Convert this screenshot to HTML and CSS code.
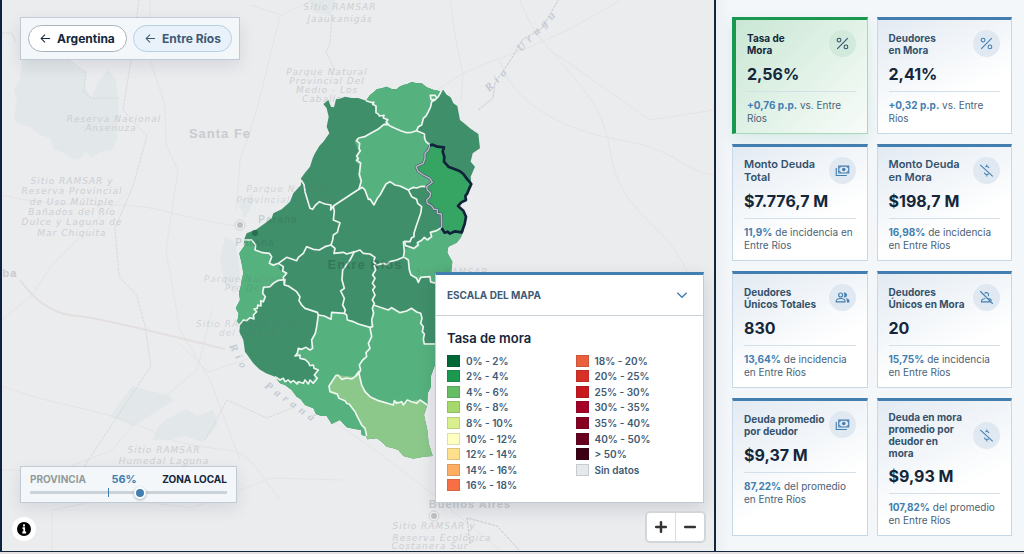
FILE: index.html
```html
<!DOCTYPE html>
<html lang="es">
<head>
<meta charset="utf-8">
<meta name="viewport" content="width=device-width, initial-scale=1">
<title>Mapa de mora - Entre Ríos</title>
<link rel="stylesheet" href="styles.css">
</head>
<body>
<svg class="sprite" aria-hidden="true">
  <symbol id="i-percent" viewBox="0 0 24 24"><g fill="none" stroke="currentColor" stroke-width="1.700"><circle cx="6.500" cy="6.500" r="3"/><circle cx="17.500" cy="17.500" r="3"/><path d="M20.500 3.500l-17 17"/></g></symbol>
  <symbol id="i-cash" viewBox="0 0 24 24"><g fill="none" stroke="currentColor" stroke-width="1.800"><path d="M6 5h16v11H6zM2 8v12h17"/></g><circle cx="14" cy="10.500" r="2.800" fill="currentColor"/><path d="M6 8a3 3 0 0 0 3-3M19 5a3 3 0 0 0 3 3M6 13a3 3 0 0 1 3 3M19 16a3 3 0 0 1 3-3" fill="none" stroke="currentColor" stroke-width="1.500"/></symbol>
  <symbol id="i-cash-off" viewBox="0 0 24 24"><path d="M2 3L22 21.500M12.500 2.500v3M12.500 18.500v3M16 8c-.7-1.800-2-2.500-3.500-2.500-1 0-1.800.3-2.500.7M8.500 15.500c.5 2 2 2.900 4 2.900 1.300 0 2.400-.3 3.200-1" fill="none" stroke="currentColor" stroke-width="1.700"/></symbol>
  <symbol id="i-group" viewBox="0 0 24 24"><g fill="none" stroke="currentColor" stroke-width="1.800"><circle cx="9" cy="8" r="3.200"/><path d="M2 19v-2c0-2.300 4.500-3.500 7-3.500s7 1.200 7 3.500v2z"/></g><path d="M14 4.200a4 4 0 1 1 0 7.600c1.400-2.300 1.400-5.300 0-7.600zM17 13.300c3 .4 6 1.700 6 3.900V20h-4v-3c0-1.500-.8-2.700-2-3.700z" fill="currentColor"/></symbol>
  <symbol id="i-person-off" viewBox="0 0 24 24"><path d="M2 2l20 20M9 5.500A3.500 3.500 0 1 1 14.500 10M14 13.500c3 .3 5.500 1.500 6 3.500M10 13.500c-3 .4-6 1.800-6 4V19h14" fill="none" stroke="currentColor" stroke-width="1.700"/></symbol>
  <symbol id="i-back" viewBox="0 0 24 24"><path d="M22 12H3M11 3.500L2.500 12l8.500 8.500" fill="none" stroke="currentColor" stroke-width="2.200"/></symbol>
</svg>

<main class="app">
  <section class="map" aria-label="Mapa">
    <svg class="map-canvas" viewBox="2 0 712 551" preserveAspectRatio="xMidYMid slice">
      <defs>
        <clipPath id="province"><path d="M280 102L288 96 295 90 303 110 312 112 318 88 330 86 345 80 365 84 385 84 408 92 420 75 432 66 440 58 455 55 470 50 485 57 500 58 508 50 520 45 532 42 545 36 560 40 575 40 590 52 612 60 632 64 640 60 650 74 662 82 670 100 682 108 690 150 705 162 720 175 745 192 750 235 728 250 722 275 735 290 722 320 724 342 712 370 706 390 684 408 708 440 700 485 692 503 680 518 655 530 652 548 667 575 664 605 656 640 700 760 613 890 602 920 603 950 593 970 592 1005 582 1035 592 1080 596 1120 608 1158 580 1160 550 1166 520 1158 505 1140 490 1135 470 1130 455 1115 440 1105 412 1108 408 1098 395 1095 393 1080 370 1076 350 1072 330 1050 318 1055 305 1062 290 1038 272 1037 258 1032 250 1015 225 1005 212 988 200 980 185 960 165 945 150 940 135 920 108 910 88 898 70 880 45 845 40 810 28 785 30 765 22 755 26 730 17 715 30 690 27 668 32 650 35 630 40 610 36 585 28 550 36 538 45 525 42 510 50 490 80 478 105 460 125 445 130 430 155 418 180 395 190 370 213 345 213 325 225 308 240 290 248 265 255 250 268 228 280 215 298 190 290 170 296 140 290 115z"/></clipPath>
      </defs>
      <rect x="-300" y="-300" width="1400" height="1200" fill="#ebecee"/>
      <g class="water">
        <path d="M22 60L65 58 74 66 86 72 85 88 92 98 98 82 108 70 116 80 119 110 117 140 112 150 100 152 92 158 86 152 78 160 70 158 62 152 54 150 50 138 40 135 30 127 20 124 14 119 17 100 14 90 20 80z"/>
        <path d="M132 386L170 396 173 401 134 426 110 417zM153 440L158 427 165 420 187 409 197 416 213 410 218 424 210 434 202 442 185 436 167 440z"/>
        <path d="M225 237l10 5 5 30-5 22-10-10-5-25zM309 0h26l-4 16-17-4zM238 203l14-10 2 8-9 18z"/>
      </g>
      <g class="roads">
        <path class="road-main" d="M20 280C40 308 60 315 78 316S180 338 225 349"/>
        <path d="M2 195C60 210 120 200 160 210S210 222 238 226M330 420C380 450 440 500 500 550"/>
        <path d="M2 386C50 405 90 407 130 422S160 440 205 447 240 446 280 500M150 0v60l15 45 1 40 12 25-12 80 14 80 30 50 30 80M281 14C270 50 260 110 240 160l-4 50M250 5l32 10 40-20M450 0l5 35 8 40-2 25M620 0c-80 50-120 55-160 75l-30 20M2 320l30-25 20-30 50-50 25-22M178 342l30 30 60-20 30 0M2 470h60l50-20 25-30 60-50 15-60M52 550v-40l60-12 80 10 80-30 70 2M500 60c10 40 60 70 120 80s60 30 94 35M520 0c20 60 80 80 90 150s60 70 80 130M550 50l100 70 64-10"/>
      </g>
      <g class="limits">
        <path d="M139 0l-8 60-8 50 24 26-14 50-18 42 4 48 18 20 8 30 6 40-24 36-60 90M2 33h10l4 9M68 60l18 12-2 20 7 6h28M205 440l22-40 40 18 25-10M332 15l-2 28-4 9 9 18"/>
        <path class="limit-strong" d="M478 110l15-12 2-15 15-22 10-17 2-4 20-12 6-10 10-18 6-2M470 544l-3-26 30 8 22 24"/>
      </g>
      <g class="places">
        <g class="parks">
          <text x="340" y="10">Sitio RAMSAR</text><text x="340" y="22">Jaaukanigás</text>
          <text x="327" y="75">Parque Natural</text><text x="327" y="84">Provincial Del</text><text x="327" y="93">Medio - Los</text><text x="325" y="102">Caballos</text>
          <text x="114" y="122">Reserva Nacional</text><text x="111" y="131">Ansenuza</text>
          <text x="72" y="184">Sitio RAMSAR y</text><text x="72" y="194">Reserva Provincial</text><text x="72" y="205">de Uso Múltiple</text><text x="72" y="215">Bañados del Río</text><text x="72" y="225">Dulce y Laguna de</text><text x="72" y="236">Mar Chiquita</text>
          <text x="164" y="453">Sitio RAMSAR</text><text x="164" y="464">Humedal Laguna</text>
          <text x="434" y="529">Sitio RAMSAR y</text><text x="442" y="541">Reserva Ecológica</text><text x="430" y="549">Costanera Sur</text>
        </g>
        <text class="state" x="220" y="138">Santa Fe</text>
        <text class="town" x="10" y="277">ba</text>
        <text class="town" x="470" y="508">Buenos Aires</text>
        <g class="river"><text transform="translate(489 92) rotate(-45)">Río</text><text transform="translate(521 52) rotate(-46)">Urugu</text><text transform="translate(229 346) rotate(62)">Río</text><text transform="translate(264 387) rotate(36)">Paraná</text></g>
        <g class="pin"><circle cx="240" cy="225" r="5"/><circle cx="434" cy="516" r="5"/></g>
        <g fill="#bfc0c3"><circle cx="240" cy="225" r="3"/><circle cx="434" cy="516" r="3"/></g>
      </g>
      <g transform="translate(230 70) scale(.333333)">
        <g clip-path="url(#province)">
          <path fill="#408f6b" d="M0 0H800V1200H0z"/>
          <g fill="#55b17d">
            <path d="M408 92L432 97 438 128 462 138 470 158 495 175 530 188 560 182 575 165 580 145 595 125 605 95 625 80 640 40 560 0 400 20z"/>
            <path d="M458 163L470 158 495 175 530 188 560 182 583 200 588 215 600 225 585 265 580 280 558 290 565 305 600 325 607 337 590 350 560 352 535 360 510 348 480 335 468 342 450 375 432 405 415 385 400 355 383 360 390 335 384 315 388 285 374 272 385 240 373 215 400 200 440 178z"/>
            <path d="M635 472L603 487 605 500 580 505 560 520 552 535 527 535 520 550 523 562 535 570 540 610 565 635 572 622 600 620 602 638 800 640 800 480z"/>
            <path d="M0 510L42 510 65 512 75 540 98 548 118 550 122 580 145 580 150 600 170 610 155 628 110 650 98 670 105 692 75 720 72 745 40 750 28 765 0 765z"/>
            <path d="M262 730L305 748 305 727 343 730 352 750 385 760 420 772 430 710 475 720 485 715 510 728 545 715 570 728 578 780 582 820 800 820 800 1000 592 1005 408 1120 100 1080 100 915 135 920 180 940 200 935 240 940 250 930 262 900 225 865 195 858 205 835 240 838 245 810 260 770z"/>
          </g>
          <path fill="#8bc88a" d="M387 910L375 920 320 916 297 948 305 970 345 990 375 1025 395 1065 408 1085 408 1200 650 1200 592 1005 560 990 520 1000 500 992 490 1005 420 980 395 945z"/>
          <path fill="#36a463" d="M600 225L642 232 640 260 648 285 700 308 724 342 712 365 706 390 684 408 708 440 695 487 665 490 635 472 632 430 610 405 590 390 602 375 590 350 607 337 600 325 565 305 558 290 580 280 585 265z"/>
        </g>
        <g class="borders">
          <path d="M408 92l14 5 10 0-4 6 10 5 0 20 8 5 2 5 14-2-2 8 14 5-6 7 7 8-13-1-18 15-22 12-18 10-18 4-7 8 10 8-2 16 4 6-11 16 5 8-5 5 12 8-2 18-2 16 6 20-7 25"/>
          <path d="M470 158L480 168 495 175 512 182 530 188 545 187 560 182 565 170 575 165 580 145 588 138 595 125 602 110 605 95 615 90 625 80 635 62M601 76h14l6 8-6 5h-12zM560 182L583 192 584 206 588 215 600 225"/>
          <path d="M590 350L575 349 560 354 550 352 535 360 510 348 495 345 480 335 468 342 450 375 442 385 432 405 420 387 415 388 405 360 397 352 383 360 310 408"/>
          <path d="M213 330L222 344 225 365 234 395 240 415 248 418 256 406 268 395 285 402 303 405 302 420 310 408 313 425 310 450 330 458 325 475 322 487 310 495 308 510 303 525"/>
          <path d="M535 360L545 380 560 388 563 400 575 410 572 430 565 450 558 470 552 490 552 500 545 503 540 515 523 514 527 527 552 535 565 525 562 518 576 510 583 502 592 510 605 500 601 487 620 482 635 472"/>
          <path d="M42 510L65 510 77 525 75 540 98 548 118 550 125 560 118 580 130 586 145 580 170 562 200 572 205 562 220 550 230 530 250 538 268 540 285 530 303 525 315 535 312 550 340 547 350 552 375 545 390 540 400 550 420 552 435 562 430 575 440 585 460 580 470 584 480 575 500 570 520 562 523 545 520 514"/>
          <path d="M145 580L160 590 158 603 170 610 160 622 163 645 165 629 145 631 130 640 120 650 100 652 98 670 106 680 100 695 92 692 93 708 83 705 82 715 72 717 80 725 70 735 72 747 60 743 50 752 40 750 28 765"/>
          <path d="M163 645L175 648 200 665 210 680 207 692 215 705 225 715 262 727 265 735 283 738 303 748 305 727 343 730 346 720 338 705 343 685 332 663 343 655 336 630 338 600 360 570 373 545"/>
          <path d="M343 730L350 735 352 750 370 755 385 762 420 772 428 770 425 750 431 730 427 715 433 700 427 690 435 675 428 660 435 650 427 640 435 625 428 615 437 600 432 585"/>
          <path d="M430 705L475 720 485 713 510 728 530 723 545 715 560 726 572 730 576 745 572 760 580 770 577 785 583 792 580 808 583 822 620 822M523 562L535 570 538 600 543 615 560 625 565 637 572 622 600 620 602 636 620 640"/>
          <path d="M265 735L260 770 256 790 245 810 248 835 240 840 228 832 215 838 205 835 202 850 195 858 210 855 210 865 225 868 235 877 240 887 250 885 252 895 265 900 253 915 262 925 250 940 240 930 235 942 225 930 220 940 205 935 202 942 190 932 182 938 175 930 165 935 160 925 150 930 135 920"/>
          <path d="M420 772L425 800 415 820 420 835 408 848 410 860 398 870 388 885 392 900 387 910 375 920 365 927 350 924 335 928 325 916 318 916 297 948 300 965 322 972 327 985 345 992 350 1000 358 1003 375 1025 382 1040 395 1065 405 1075 410 1098"/>
          <path d="M387 910L395 945 405 965 420 980 445 992 490 1005 493 992 500 1000 515 995 520 1005 532 990 545 995 560 1000 570 990 592 1005M388 902l-13 18"/>
        </g>
        <path class="sel-shared-edge" d="M600 225L595 240 585 250 585 265 580 280 558 290 565 305 580 315 600 325 607 337 590 350 592 360 602 370 600 380 590 390 592 400 605 408 612 418 622 418 622 430 634 432 635 472"/>
        <path class="sel-shared" d="M600 225L595 240 585 250 585 265 580 280 558 290 565 305 580 315 600 325 607 337 590 350 592 360 602 370 600 380 590 390 592 400 605 408 612 418 622 418 622 430 634 432 635 472"/>
        <path class="sel" d="M600 226L608 224 622 230 642 232 638 245 643 260 642 275 655 290 675 298 690 304 700 312 712 328 724 342 718 355 712 370 706 378 708 390 694 397 684 408 700 422 708 440 704 462 695 487 675 484 660 491 652 485 644 488 635 474"/>
      </g>
      <g class="overlay">
        <text class="town region" x="365" y="269">Entre Ríos</text>
        <text class="town small" x="278" y="223">Paraná</text><text class="town small" x="255" y="246">Paraná</text>
        <circle cx="255" cy="233" r="3" fill="#2b6e51"/>
        <g class="parks"><text x="287" y="192">Parque Natural</text><text x="287" y="203">Provincial Cayastá</text><text x="248" y="282">Parque Nacional</text><text x="250" y="291">Pre Delta</text><text x="249" y="327">Sitio RAMSAR Delta</text><text x="248" y="336">del Paraná</text><text x="452" y="275">Sitio RAMSAR</text></g>
      </g>
    </svg>

    <nav class="crumbs" aria-label="Navegación">
      <button class="pill" type="button"><svg class="pill-icon"><use href="#i-back"/></svg>Argentina</button>
      <button class="pill pill-soft" type="button"><svg class="pill-icon"><use href="#i-back"/></svg>Entre Ríos</button>
    </nav>

    <section class="legend">
      <button class="legend-toggle" type="button" aria-expanded="true">ESCALA DEL MAPA<svg class="chevron" viewBox="0 0 12 12"><path d="M2 4l4 4 4-4" fill="none" stroke="#437eb0" stroke-width="1.200"/></svg></button>
      <div class="legend-body">
        <h2 class="legend-title">Tasa de mora</h2>
        <ul class="scale">
          <li class="step"><i class="swatch c1"></i>0% - 2%</li><li class="step"><i class="swatch c2"></i>2% - 4%</li><li class="step"><i class="swatch c3"></i>4% - 6%</li><li class="step"><i class="swatch c4"></i>6% - 8%</li><li class="step"><i class="swatch c5"></i>8% - 10%</li><li class="step"><i class="swatch c6"></i>10% - 12%</li><li class="step"><i class="swatch c7"></i>12% - 14%</li><li class="step"><i class="swatch c8"></i>14% - 16%</li><li class="step"><i class="swatch c9"></i>16% - 18%</li>
          <li class="step"><i class="swatch c10"></i>18% - 20%</li><li class="step"><i class="swatch c11"></i>20% - 25%</li><li class="step"><i class="swatch c12"></i>25% - 30%</li><li class="step"><i class="swatch c13"></i>30% - 35%</li><li class="step"><i class="swatch c14"></i>35% - 40%</li><li class="step"><i class="swatch c15"></i>40% - 50%</li><li class="step"><i class="swatch c16"></i>&gt; 50%</li><li class="step"><i class="swatch c17"></i>Sin datos</li>
        </ul>
      </div>
    </section>

    <div class="level">
      <div class="level-head"><label class="muted" for="level">PROVINCIA</label><output class="level-value" for="level">56%</output><span>ZONA LOCAL</span></div>
      <input class="range" id="level" type="range" min="0" max="100" step="0.1" value="56.4">
    </div>

    <button class="info" type="button" aria-label="Información"><svg viewBox="0 0 24 24"><circle cx="12" cy="12" r="7" fill="#000"/><path d="M12 7.200v2.200M10.500 11.200h1.700v4.300M10.300 15.500h3.800" fill="none" stroke="#fff" stroke-width="1.800"/></svg></button>
    <div class="zoom">
      <button class="zoom-btn" type="button" aria-label="Acercar"><svg viewBox="0 0 29 29"><path d="M14.500 9.500v10M9.500 14.500h10" stroke="#333" stroke-width="2.600" stroke-linecap="round"/></svg></button>
      <button class="zoom-btn" type="button" aria-label="Alejar"><svg viewBox="0 0 29 29"><path d="M9.500 14.500h10" stroke="#333" stroke-width="2.600" stroke-linecap="round"/></svg></button>
    </div>
  </section>

  <aside class="stats" aria-label="Indicadores">
    <article class="card card-active"><header class="card-head"><h3 class="card-title">Tasa de<br>Mora</h3><span class="badge"><svg><use href="#i-percent"/></svg></span></header><p class="value">2,56%</p><p class="note"><b>+0,76 p.p.</b> vs. Entre<br>Ríos</p></article>
    <article class="card"><header class="card-head"><h3 class="card-title">Deudores<br>en Mora</h3><span class="badge"><svg><use href="#i-percent"/></svg></span></header><p class="value">2,41%</p><p class="note"><b>+0,32 p.p.</b> vs. Entre<br>Ríos</p></article>
    <article class="card"><header class="card-head"><h3 class="card-title card-title-lg">Monto Deuda<br>Total</h3><span class="badge"><svg><use href="#i-cash"/></svg></span></header><p class="value">$7.776,7 M</p><p class="note"><b>11,9%</b> de incidencia en<br>Entre Ríos</p></article>
    <article class="card"><header class="card-head"><h3 class="card-title card-title-lg">Monto Deuda<br>en Mora</h3><span class="badge"><svg><use href="#i-cash-off"/></svg></span></header><p class="value">$198,7 M</p><p class="note"><b>16,98%</b> de incidencia<br>en Entre Ríos</p></article>
    <article class="card"><header class="card-head"><h3 class="card-title">Deudores<br>Únicos Totales</h3><span class="badge"><svg><use href="#i-group"/></svg></span></header><p class="value">830</p><p class="note"><b>13,64%</b> de incidencia<br>en Entre Ríos</p></article>
    <article class="card"><header class="card-head"><h3 class="card-title">Deudores<br>Únicos en Mora</h3><span class="badge"><svg><use href="#i-person-off"/></svg></span></header><p class="value">20</p><p class="note"><b>15,75%</b> de incidencia<br>en Entre Ríos</p></article>
    <article class="card"><header class="card-head"><h3 class="card-title">Deuda promedio<br>por deudor</h3><span class="badge"><svg><use href="#i-cash"/></svg></span></header><p class="value">$9,37 M</p><p class="note"><b>87,22%</b> del promedio<br>en Entre Ríos</p></article>
    <article class="card"><header class="card-head"><h3 class="card-title">Deuda en mora<br>promedio por<br>deudor en<br>mora</h3><span class="badge"><svg><use href="#i-cash-off"/></svg></span></header><p class="value">$9,93 M</p><p class="note"><b>107,82%</b> del promedio<br>en Entre Ríos</p></article>
  </aside>
</main>
</body>
</html>
```
FILE: styles.css
```css
* { box-sizing: border-box; }
body { margin: 0; background: #e6dfdf; color: #14263a; font-family: "Inter", "Liberation Sans", sans-serif; }
h2, h3, p, ul { margin: 0; padding: 0; }
button { font: inherit; color: inherit; cursor: pointer; }
.sprite { display: none; }

.app { display: grid; grid-template-columns: minmax(0, 1fr) 308px; min-height: calc(100vh - 2px); border-bottom: 1px solid #14263a; }
.map { position: relative; overflow: hidden; border-left: 2px solid #0d2240; border-right: 2px solid #14263a; background: #ebecee; }
.map-canvas { position: absolute; inset: 0; width: 100%; height: 100%; }

.water { fill: #e2e7e9; }
.roads { fill: none; stroke: #e5e4e4; stroke-width: 1; }
.road-main { stroke: #e4dfdf; stroke-width: 2; }
.limits { fill: none; stroke: #d9dadc; stroke-width: 1; stroke-dasharray: 3 1; }
.limit-strong { stroke: #c8cad2; }
.places text, .overlay text { text-anchor: middle; }
.parks { font: italic 9px "DejaVu Sans", sans-serif; letter-spacing: 1px; fill: #cdcfd2; }
.state { font: bold 13px "Liberation Sans", sans-serif; letter-spacing: 1px; fill: #c9cbce; }
.town { font: bold 11px "Liberation Sans", sans-serif; letter-spacing: 1px; fill: #c9cbce; }
.river { font: bold italic 11px "Liberation Serif", serif; letter-spacing: 5px; fill: #c3cbd4; }
.places .river text { text-anchor: start; }
.pin { fill: #f1f1f2; stroke: #d0d1d3; }
.overlay .town { fill: #22543f; fill-opacity: .4; }
.overlay .region { font-size: 13px; }
.overlay .small { font-size: 10px; fill-opacity: .2; }
.overlay .parks { fill: #5a6a70; fill-opacity: .2; }
.borders { fill: none; stroke: #eef6f1; stroke-width: 5; stroke-linejoin: round; }
.sel-shared-edge { fill: none; stroke: #4d6070; stroke-width: 8; stroke-linejoin: round; }
.sel-shared { fill: none; stroke: #b4bdc3; stroke-width: 4; stroke-linejoin: round; }
.sel { fill: none; stroke: #10233a; stroke-width: 8; stroke-linejoin: round; }

.crumbs { position: absolute; left: 18px; top: 17px; display: flex; gap: 6px; padding: 7px; border: 1px solid #c0cbd5; background: #f3f7f9; box-shadow: 0 6px 16px rgba(20, 38, 58, .1); }
.pill { display: flex; align-items: center; gap: 6px; height: 27px; padding: 0 7px 0 11px; border: 1px solid #a9b3bc; border-radius: 14px; background: #fff; font-size: 12px; font-weight: 700; }
.pill { min-width: 99px; }
.pill-soft { border-color: #b6cfe3; background: #e9f2fa; color: #3d5a74; }
.pill-icon { width: 11px; height: 11px; }

.legend { position: absolute; right: 10px; bottom: 48px; width: 269px; border: 1px solid #c0cbd5; border-top: 3px solid #437eb0; background: #fff; box-shadow: 0 6px 16px rgba(20, 38, 58, .14); }
.legend-toggle { display: flex; align-items: center; justify-content: space-between; width: 100%; height: 41px; padding: 0 14px 0 11px; border: 0; border-bottom: 1px solid #cbd2d8; background: none; color: #3d5a74; font-size: 10px; font-weight: 700; }
.chevron { width: 14px; height: 14px; }
.legend-body { padding: 14px 11px 9px; }
.legend-title { font-size: 13px; line-height: 16px; font-weight: 600; }
.scale { display: grid; grid-template: repeat(9, 1fr) / 1fr 1fr; grid-auto-flow: column; column-gap: 12px; min-height: 140px; margin-top: 7px; list-style: none; }
.step { display: flex; align-items: center; gap: 6px; color: #3d5a74; font-size: 10px; line-height: 12px; font-weight: 600; }
.swatch { width: 13px; height: 12px; border: 1px solid rgba(20, 38, 58, .15); }
.c1 { background: #006837; } .c2 { background: #1a9850; } .c3 { background: #66bd63; }
.c4 { background: #a6d96a; } .c5 { background: #d9ef8b; } .c6 { background: #ffffbf; }
.c7 { background: #fee08b; } .c8 { background: #fdae61; } .c9 { background: #f96f45; }
.c10 { background: #ea5f3c; } .c11 { background: #d93026; } .c12 { background: #c9181d; }
.c13 { background: #a50026; } .c14 { background: #87001f; } .c15 { background: #67001f; }
.c16 { background: #3d0012; } .c17 { background: #e5e9ec; }

.level { position: absolute; left: 18px; bottom: 48px; width: 217px; padding: 5px 9px 3px; border: 1px solid #c0cbd5; background: #f3f7fa; box-shadow: 0 6px 16px rgba(20, 38, 58, .1); }
.level-head { display: flex; justify-content: space-between; font-size: 10px; line-height: 14px; font-weight: 700; }
.muted { color: #929b9b; }
.level-value { color: #437eb0; font-size: 11px; font-weight: 700; }
.range { display: block; width: 100%; height: 13px; margin: 0; appearance: none; background: linear-gradient(#437eb0, #437eb0) 40% 50% / 1px 9px no-repeat, linear-gradient(#cbd2d8, #cbd2d8) 50% 50% / 100% 3px no-repeat; }
.range::-webkit-slider-thumb { appearance: none; width: 12px; height: 12px; border: 2px solid #fff; border-radius: 50%; background: #437eb0; box-shadow: 0 1px 3px rgba(20, 38, 58, .35); }

.info { position: absolute; left: 10px; bottom: 10px; width: 24px; height: 24px; padding: 0; border: 0; border-radius: 50%; background: #fff; }
.info svg, .zoom-btn svg { display: block; width: 100%; height: 100%; }
.zoom { position: absolute; right: 8px; bottom: 8px; display: flex; border: 2px solid #d3d6d9; border-radius: 5px; background: #fff; overflow: hidden; }
.zoom-btn { width: 28px; height: 28px; padding: 0; border: 0; background: none; }
.zoom-btn + .zoom-btn { width: 29px; border-left: 1px solid #ddd; }

.stats { display: grid; grid-template-columns: repeat(2, minmax(0, 1fr)); gap: 10px 9px; align-content: start; padding: 17px 12px 13px 16px; background: linear-gradient(90deg, #ecf0f4, #f3f7fa 14px); }
.card { padding: 10px 11px 8px; border: 1px solid #c6d9e6; border-top: 3px solid #437eb0; background: linear-gradient(155deg, #e2eaf2, #fff 65%); }
.card-active { border-color: #1a9850 #a5d9b9 #a5d9b9 #1a9850; border-left-width: 4px; background: linear-gradient(135deg, #c9e7d4, #f8fcf9); box-shadow: 0 6px 14px rgba(26, 152, 80, .12); }
.card-head { display: flex; align-items: center; justify-content: space-between; }
.card-title { color: #34516b; font-size: 10px; line-height: 12px; font-weight: 700; white-space: nowrap; }
.card-title-lg { font-size: 11px; line-height: 13px; font-weight: 600; }
.card-active .card-title { color: #14263a; }
.badge { display: grid; place-items: center; flex: none; width: 27px; height: 27px; border-radius: 50%; background: #e0e9f1; color: #437eb0; }
.badge svg { width: 15px; height: 15px; }
.card-active .badge { background: #d1eadb; color: #34516b; }
.value { margin: 6px 0; font-size: 16px; line-height: 22px; font-weight: 700; white-space: nowrap; }
.note { padding-top: 7px; border-top: 1px solid #d3e0e9; color: #4a6278; font-size: 10px; line-height: 13px; white-space: nowrap; }
.note b { color: #437eb0; font-weight: 700; }
```
